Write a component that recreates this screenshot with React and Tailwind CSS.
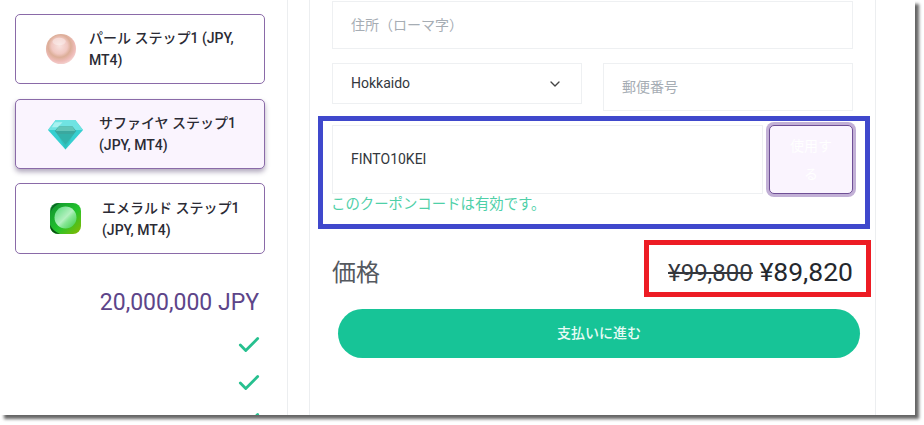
import { Check, ChevronDown } from "lucide-react"

const cjk = "font-['Roboto','Noto_Sans_CJK_JP',sans-serif]"

function Pearl() {
  return (
    <svg width="32" height="32" viewBox="0 0 34 34" className="shrink-0">
      <defs>
        <radialGradient id="pearl" cx="0.45" cy="0.4" r="0.65">
          <stop offset="0" stopColor="#f8e2df" />
          <stop offset="0.4" stopColor="#f1c8c2" />
          <stop offset="0.58" stopColor="#dcae98" />
          <stop offset="0.8" stopColor="#efbcb9" />
          <stop offset="1" stopColor="#f6dcd9" />
        </radialGradient>
      </defs>
      <circle cx="17" cy="17" r="16" fill="url(#pearl)" />
      <ellipse cx="15" cy="9" rx="7" ry="4" fill="#fff" opacity="0.35" />
    </svg>
  )
}

function Diamond() {
  return (
    <svg width="37" height="33" viewBox="0 0 38 33" className="shrink-0">
      <path d="M9 1.5h20l8 10.5L19 32 1 12z" fill="#35cfd0" />
      <path d="M9 1.5h20l8 10.5H1z" fill="#6fe3e2" />
      <path d="M12 8h14l4 5-11 14L8 13z" fill="#3aa89f" />
      <path d="M12 8h14l3 5H9z" fill="#62c5b8" />
      <path d="M8 4h8l-5 5H5z" fill="#a8f2f0" />
      <path d="M19 32l-8-16h16z" fill="#2fb9b2" opacity="0.6" />
    </svg>
  )
}

function Emerald() {
  return (
    <svg width="33" height="33" viewBox="0 0 33 33" className="shrink-0">
      <defs>
        <linearGradient id="emerald" x1="0" y1="0" x2="1" y2="1">
          <stop offset="0" stopColor="#0f8f30" />
          <stop offset="0.55" stopColor="#23c42c" />
          <stop offset="1" stopColor="#8ab800" />
        </linearGradient>
        <linearGradient id="emeraldFace" x1="0" y1="0" x2="1" y2="1">
          <stop offset="0" stopColor="#55da78" />
          <stop offset="0.5" stopColor="#b4f0c0" />
          <stop offset="0.62" stopColor="#86e695" />
          <stop offset="1" stopColor="#38cc44" />
        </linearGradient>
      </defs>
      <rect x="1" y="1" width="31" height="31" rx="8" fill="url(#emerald)" />
      <path d="M1 23c0 6 4 9 10 9-5-2-8-5-10-9z" fill="#0b4d14" />
      <path d="M2 9c0-5 4-8 9-8-4 2-7 4-9 8z" fill="#0b5d24" />
      <circle cx="16.5" cy="15.5" r="11" fill="url(#emeraldFace)" />
    </svg>
  )
}

function PlanCard({ icon, children, active, iconBox, height }) {
  return (
    <div
      className={`flex shrink-0 items-center rounded-[5px] border border-[#8a6aa8] ${height} ${
        active ? "bg-[#faf4fe] shadow-[0_3px_5px_rgba(60,40,90,0.4)]" : "bg-white"
      }`}
    >
      <div className={`flex justify-center ${iconBox}`}>{icon}</div>
      <div className="flex-1 pr-[12px] text-[14px] font-medium leading-[22px] text-[#2b2b35]">{children}</div>
    </div>
  )
}

function Field({ className, children }) {
  return <div className={`flex shrink-0 items-center border border-[#eef0f2] bg-white px-[18px] text-[14px] ${className}`}>{children}</div>
}

export default function App() {
  return (
    <div className={`h-[425px] w-[924px] overflow-hidden bg-white ${cjk}`}>
      <div className="relative flex h-[415px] w-[915px] overflow-hidden bg-white shadow-[4px_4px_3px_rgba(0,0,0,0.6)]">
        {/* plan column */}
        <aside className="flex w-[288px] shrink-0 flex-col border-r border-[#eceef0] pl-[15px] pr-[22px] pt-[14px]">
          <PlanCard icon={<Pearl />} iconBox="w-[73px] pl-[16px]" height="h-[70px]">
            パール ステップ1 (JPY, MT4)
          </PlanCard>
          <div className="mt-[15px] shrink-0">
            <PlanCard active icon={<Diamond />} iconBox="w-[83px] pl-[15px]" height="h-[70px]">
              サファイヤ ステップ1 (JPY, MT4)
            </PlanCard>
          </div>
          <div className="mt-[14px] shrink-0">
            <PlanCard icon={<Emerald />} iconBox="w-[86px] pl-[13px]" height="h-[71px]">
              エメラルド ステップ1 (JPY, MT4)
            </PlanCard>
          </div>
          <div className="mt-[34px] shrink-0 pr-[6px] text-right text-[23px] leading-[30px] text-[#5d4589]">20,000,000 JPY</div>
          <div className="mt-[14px] flex flex-col items-end gap-[12px] pr-[3px] text-[#27c08f]">
            <Check size={26} strokeWidth={2.6} className="shrink-0" />
            <Check size={26} strokeWidth={2.6} className="shrink-0" />
            <Check size={26} strokeWidth={2.6} className="shrink-0" />
          </div>
        </aside>

        {/* checkout form */}
        <main className="ml-[21px] flex w-[567px] shrink-0 flex-col border-x border-[#eceef0] px-[22px] pt-[1px]">
          <Field className="h-[48px] text-[14.4px] text-[#a6adb4]">住所（ローマ字）</Field>
          <div className="mt-[14px] flex items-start gap-[21px]">
            <Field className="h-[41px] w-[250px] justify-between text-[#33373d]">
              <span>Hokkaido</span>
              <ChevronDown size={16} strokeWidth={2} className="text-[#444]" />
            </Field>
            <Field className="h-[48px] flex-1 text-[14.4px] text-[#a6adb4]">郵便番号</Field>
          </div>
          <div className="mt-[14px] flex gap-[6px]">
            <Field className="h-[69px] w-[431px] text-[13.6px] text-[#33373d]">FINTO10KEI</Field>
            <button className="flex h-[69px] flex-1 items-center justify-center rounded-[5px] border border-[#6f4f96] bg-[#faf4fe] px-[14px] text-[14px] leading-[28px] text-white ring-[3px] ring-[#c2b0d6]">
              使用する
            </button>
          </div>
          <div className="mt-[1px] shrink-0 -ml-[1px] text-[14.4px] leading-[20px] text-[#4fd0a8]">このクーポンコードは有効です。</div>
          <div className="mt-[39px] flex shrink-0 items-center justify-between">
            <span className="text-[24px] leading-[36px] text-[#55595f]">価格</span>
            <span className="text-[26.5px] leading-[36px] text-[#25282e]">
              <span className="text-[24px] text-[#33363c] line-through">¥99,800</span> ¥89,820
            </span>
          </div>
          <button className="mx-[6px] mt-[18px] h-[49px] w-[522px] shrink-0 rounded-full bg-[#17c497] text-[14px] font-medium text-[#e8fbf5]">
            支払いに進む
          </button>
        </main>

        {/* annotation boxes */}
        <div className="absolute left-[318px] top-[116px] h-[113px] w-[552px] border-[5px] border-[#3f48cc]" />
        <div className="absolute left-[644px] top-[240px] h-[57px] w-[227px] border-[5px] border-[#ed1c24]" />
      </div>
    </div>
  )
}
